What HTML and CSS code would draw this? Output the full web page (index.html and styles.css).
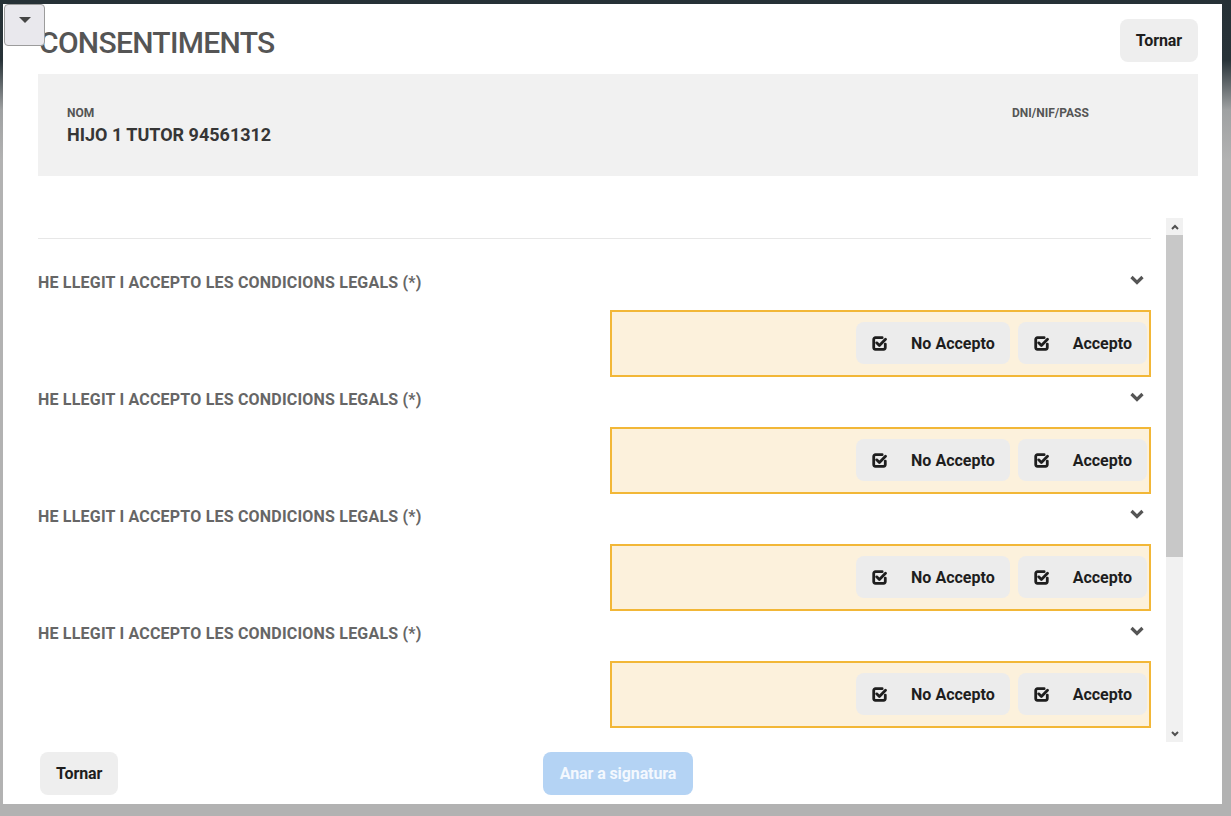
FILE: index.html
```html
<!DOCTYPE html>
<html>
	<head>
		<meta charset="UTF-8">
		<title>Consentiments</title>
		<link rel="stylesheet" href="styles.css">
	</head>

	<body>
		<div class="modal">
			<button class="toggle" type="button"><span class="caret"></span></button>

			<header class="modal-head">
				<h1>CONSENTIMENTS</h1>
				<button class="btn" type="button">Tornar</button>
			</header>

			<section class="info">
				<div class="info-col">
					<div class="info-label">NOM</div>
					<div class="info-value">HIJO 1 TUTOR 94561312</div>
				</div>
				<div class="info-col">
					<div class="info-label">DNI/NIF/PASS</div>
				</div>
			</section>

			<div class="scroll">
				<div class="scroll-body">
					<div class="item">
						<div class="item-title">
							<span>HE LLEGIT I ACCEPTO LES CONDICIONS LEGALS (*)</span>
							<svg class="chevron" viewBox="0 0 14 10"><path d="M1.5 2 L7 7.5 L12.5 2"/></svg>
						</div>
						<div class="choice">
							<button class="btn btn-check" type="button"><svg class="check" viewBox="0 0 14 14"><path d="M9.5 1.6 H3.2 a1.6 1.6 0 0 0 -1.6 1.6 V10.8 a1.6 1.6 0 0 0 1.6 1.6 H10.8 a1.6 1.6 0 0 0 1.6 -1.6 V7.5"/><path d="M4.4 6.4 L6.9 8.9 L12.6 3"/></svg>No Accepto</button>
							<button class="btn btn-check" type="button"><svg class="check" viewBox="0 0 14 14"><path d="M9.5 1.6 H3.2 a1.6 1.6 0 0 0 -1.6 1.6 V10.8 a1.6 1.6 0 0 0 1.6 1.6 H10.8 a1.6 1.6 0 0 0 1.6 -1.6 V7.5"/><path d="M4.4 6.4 L6.9 8.9 L12.6 3"/></svg>Accepto</button>
						</div>
					</div>
					<div class="item">
						<div class="item-title">
							<span>HE LLEGIT I ACCEPTO LES CONDICIONS LEGALS (*)</span>
							<svg class="chevron" viewBox="0 0 14 10"><path d="M1.5 2 L7 7.5 L12.5 2"/></svg>
						</div>
						<div class="choice">
							<button class="btn btn-check" type="button"><svg class="check" viewBox="0 0 14 14"><path d="M9.5 1.6 H3.2 a1.6 1.6 0 0 0 -1.6 1.6 V10.8 a1.6 1.6 0 0 0 1.6 1.6 H10.8 a1.6 1.6 0 0 0 1.6 -1.6 V7.5"/><path d="M4.4 6.4 L6.9 8.9 L12.6 3"/></svg>No Accepto</button>
							<button class="btn btn-check" type="button"><svg class="check" viewBox="0 0 14 14"><path d="M9.5 1.6 H3.2 a1.6 1.6 0 0 0 -1.6 1.6 V10.8 a1.6 1.6 0 0 0 1.6 1.6 H10.8 a1.6 1.6 0 0 0 1.6 -1.6 V7.5"/><path d="M4.4 6.4 L6.9 8.9 L12.6 3"/></svg>Accepto</button>
						</div>
					</div>
					<div class="item">
						<div class="item-title">
							<span>HE LLEGIT I ACCEPTO LES CONDICIONS LEGALS (*)</span>
							<svg class="chevron" viewBox="0 0 14 10"><path d="M1.5 2 L7 7.5 L12.5 2"/></svg>
						</div>
						<div class="choice">
							<button class="btn btn-check" type="button"><svg class="check" viewBox="0 0 14 14"><path d="M9.5 1.6 H3.2 a1.6 1.6 0 0 0 -1.6 1.6 V10.8 a1.6 1.6 0 0 0 1.6 1.6 H10.8 a1.6 1.6 0 0 0 1.6 -1.6 V7.5"/><path d="M4.4 6.4 L6.9 8.9 L12.6 3"/></svg>No Accepto</button>
							<button class="btn btn-check" type="button"><svg class="check" viewBox="0 0 14 14"><path d="M9.5 1.6 H3.2 a1.6 1.6 0 0 0 -1.6 1.6 V10.8 a1.6 1.6 0 0 0 1.6 1.6 H10.8 a1.6 1.6 0 0 0 1.6 -1.6 V7.5"/><path d="M4.4 6.4 L6.9 8.9 L12.6 3"/></svg>Accepto</button>
						</div>
					</div>
					<div class="item">
						<div class="item-title">
							<span>HE LLEGIT I ACCEPTO LES CONDICIONS LEGALS (*)</span>
							<svg class="chevron" viewBox="0 0 14 10"><path d="M1.5 2 L7 7.5 L12.5 2"/></svg>
						</div>
						<div class="choice">
							<button class="btn btn-check" type="button"><svg class="check" viewBox="0 0 14 14"><path d="M9.5 1.6 H3.2 a1.6 1.6 0 0 0 -1.6 1.6 V10.8 a1.6 1.6 0 0 0 1.6 1.6 H10.8 a1.6 1.6 0 0 0 1.6 -1.6 V7.5"/><path d="M4.4 6.4 L6.9 8.9 L12.6 3"/></svg>No Accepto</button>
							<button class="btn btn-check" type="button"><svg class="check" viewBox="0 0 14 14"><path d="M9.5 1.6 H3.2 a1.6 1.6 0 0 0 -1.6 1.6 V10.8 a1.6 1.6 0 0 0 1.6 1.6 H10.8 a1.6 1.6 0 0 0 1.6 -1.6 V7.5"/><path d="M4.4 6.4 L6.9 8.9 L12.6 3"/></svg>Accepto</button>
						</div>
					</div>
				</div>
				<div class="scrollbar">
					<div class="sb-arrow"><svg viewBox="0 0 8 6"><path d="M1 5 L4 2 L7 5"/></svg></div>
					<div class="sb-track"><div class="sb-thumb"></div></div>
					<div class="sb-arrow"><svg viewBox="0 0 8 6"><path d="M1 1 L4 4 L7 1"/></svg></div>
				</div>
			</div>

			<footer class="modal-foot">
				<button class="btn back" type="button">Tornar</button>
				<button class="btn btn-primary" type="button" disabled>Anar a signatura</button>
			</footer>
		</div>
	</body>

</html>
```

FILE: styles.css
```css
/* fons fosc a dalt, gris a baix, el modal blanc a sobre */
html,
body {
	margin: 0;
	padding: 0;
}

body {
	height: 816px;
	box-sizing: border-box;
	padding: 4px 9px 0 3px;
	background: linear-gradient(to bottom, #263136 0, #283338 60px, #9fa1a2 110px, #b2b2b2 160px);
	font-family: Roboto, "Liberation Sans", Arial, sans-serif;
	overflow: hidden;
}

.modal {
	position: relative;
	height: 800px;
	box-sizing: border-box;
	padding: 15px 24px 9px 35px;
	background-color: #fff;
	display: flex;
	flex-direction: column;
}

.toggle {
	position: absolute;
	top: 0;
	left: 1px;
	width: 41px;
	height: 42px;
	padding: 0;
	background-color: #e9e8ed;
	border: 1px solid #9c9c9c;
	border-radius: 4px;
	display: flex;
	align-items: center;
	justify-content: center;
}

.caret {
	width: 0;
	height: 0;
	border-left: 6.5px solid transparent;
	border-right: 6.5px solid transparent;
	border-top: 6px solid #454545;
	margin-bottom: 10px;
}

.modal-head {
	display: flex;
	justify-content: space-between;
	align-items: flex-start;
	height: 43px;
}

.modal-head h1 {
	margin: 9px 0 0 1px;
	font-size: 30px;
	line-height: 30px;
	font-weight: 500;
	letter-spacing: -0.7px;
	color: #555;
}

.btn {
	height: 43px;
	padding: 0 16px;
	border: none;
	border-radius: 8px;
	background-color: #eeeeee;
	color: #1e1e1e;
	font-family: Roboto, "Liberation Sans", Arial, sans-serif;
	font-size: 16px;
	font-weight: 700;
	letter-spacing: -0.1px;
}

.info {
	margin-top: 12px;
	height: 102px;
	box-sizing: border-box;
	padding: 32px 29px 0;
	background-color: #f1f1f1;
	display: grid;
	grid-template-columns: 1fr 157px;
}

.info-label {
	font-size: 12px;
	line-height: 14px;
	font-weight: 700;
	color: #555;
}

.info-value {
	margin-top: 4px;
	font-size: 18px;
	line-height: 21px;
	font-weight: 700;
	color: #363636;
}

.scroll {
	margin-top: 42px;
	margin-right: 15px;
	height: 524px;
	display: flex;
}

.scroll-body {
	flex: 1;
	overflow: hidden;
	padding-right: 15px;
}

.scroll-body::before {
	content: "";
	display: block;
	height: 20px;
	border-bottom: 1px solid #e7e7e7;
	margin-bottom: 21px;
}

.item-title {
	height: 44px;
	display: flex;
	justify-content: space-between;
	align-items: center;
	margin-bottom: 6px;
	font-size: 16px;
	font-weight: 700;
	color: #666;
	letter-spacing: 0.2px;
}

.chevron {
	width: 14px;
	height: 10px;
	margin: 0 7px 5px 0;
	fill: none;
	stroke: #555;
	stroke-width: 3.2;
}

.choice {
	width: 541px;
	height: 67px;
	box-sizing: border-box;
	margin-left: auto;
	padding: 10px 2px 11px;
	border: 2px solid #f2b737;
	background-color: #fcf1dc;
	display: flex;
	justify-content: flex-end;
	gap: 8px;
}

.btn-check {
	height: 42px;
	display: flex;
	align-items: center;
	gap: 24px;
	padding: 0 15px 0 16px;
	background-color: #ececec;
	letter-spacing: 0;
}

.check {
	width: 15px;
	height: 15px;
	fill: none;
	stroke: #1e1e1e;
	stroke-width: 2.6;
	stroke-linecap: round;
	stroke-linejoin: round;
}

.scrollbar {
	width: 17px;
	display: flex;
	flex-direction: column;
	background-color: #f1f1f1;
}

.sb-arrow {
	height: 17px;
	display: flex;
	align-items: center;
	justify-content: center;
}

.sb-arrow svg {
	width: 8px;
	height: 6px;
	fill: none;
	stroke: #505050;
	stroke-width: 2;
}

.sb-track {
	flex: 1;
}

.sb-thumb {
	height: 322px;
	background-color: #c8c8c8;
}

.modal-foot {
	margin-top: 10px;
	display: grid;
	grid-template-columns: 1fr auto 1fr;
}

.back {
	justify-self: start;
	margin-left: 2px;
}

.btn-primary {
	background-color: #b4d3f4;
	color: #f3f8fe;
	padding: 0 17px;
}
```
